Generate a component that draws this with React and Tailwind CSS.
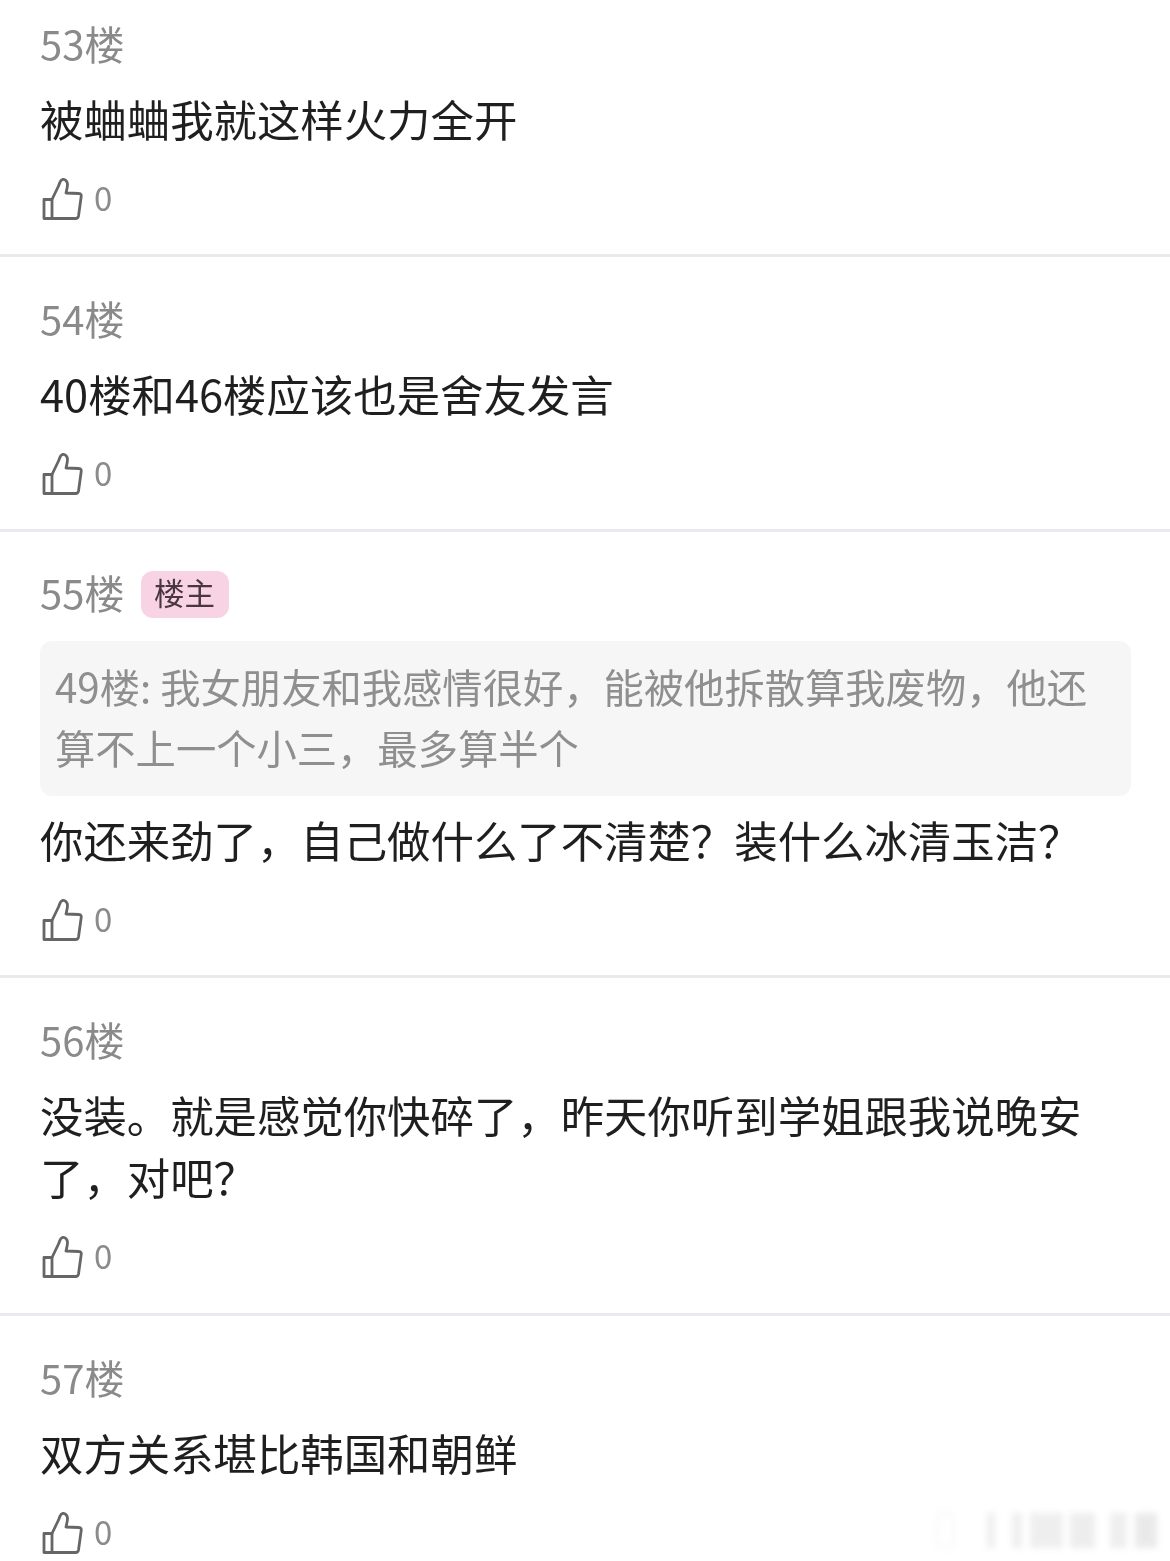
const font = { fontFamily: '"Noto Sans CJK SC", "Noto Sans", sans-serif' };

function Thumb() {
  return (
    <svg width="42" height="44" viewBox="0 0 42 44" fill="none" stroke="#666666" strokeWidth="2.8" strokeLinejoin="round" strokeLinecap="round" className="mt-[4px] block">
      <path d="M3 22.5H11V41.5H3Z" />
      <path d="M11 22.5L17.5 9C18.7 6.5 19 3 21.5 2.5C24.5 2 26.5 4.5 26.5 7.5C26.5 10.5 25.5 13.5 25 16L38 16.5C40 16.5 40.5 18 40.2 19.5L37.5 39C37.2 40.8 36 41.5 34.5 41.5H11" />
    </svg>
  );
}

function Like() {
  return (
    <div className="flex h-[44px] items-center pl-[1px]">
      <Thumb />
      <span className="ml-[11px] text-[33px] leading-[44px] text-[#8b8b8b]">0</span>
    </div>
  );
}

function Post({ floor, badge, quote, lines, last, tall, wide }) {
  const bottom = last
    ? "pb-0"
    : tall
      ? "pb-[36.5px] border-b-[3px] border-[#e9e9ee]"
      : wide
        ? "pb-[35.5px] border-b-[3px] border-[#e9e9ee]"
        : "pb-[34.5px] border-b-[3px] border-[#e9e9ee]";
  return (
    <section className={`px-[40px] ${badge ? "pt-[32px]" : "pt-[33px]"} ${bottom}`}>
      <div className="flex h-[56px] items-center">
        <span className="text-[40px] leading-[56px] text-[#8a8a8a]">{floor}</span>
        {badge && (
          <span className="ml-[17px] mt-[4px] flex h-[47px] w-[88px] items-center justify-center rounded-[12px] bg-[#f8d3e4] pb-[3px] pr-[2px] text-[30.5px] leading-none text-[#4a3640]">
            {badge}
          </span>
        )}
      </div>
      {quote && (
        <div className="mt-[21px] w-[1091px] rounded-[12px] bg-[#f6f6f6] px-[15px] pt-[13.5px] pb-[19.5px] text-[40.3px] leading-[61px] text-[#8f8f8f]">
          {quote.map((q) => (
            <div key={q} className="whitespace-nowrap">{q}</div>
          ))}
        </div>
      )}
      <div className={`${quote ? "mt-[12px]" : "mt-[16px]"} text-[43.4px] leading-[62px] text-[#1f1f1f]`}>
        {lines.map((l) => (
          <div key={l} className="whitespace-nowrap">{l}</div>
        ))}
      </div>
      <div className="mt-[26px]"><Like /></div>
    </section>
  );
}

export default function App() {
  return (
    <div style={font} className="relative h-[1561px] w-[1170px] overflow-hidden bg-white">
      <div className="-mt-[18px] blur-[0.6px]">
        <Post floor="53楼" lines={["被蛐蛐我就这样火力全开"]} />
        <Post floor="54楼" lines={["40楼和46楼应该也是舍友发言"]} wide />
        <Post
          floor="55楼"
          badge="楼主"
          quote={["49楼: 我女朋友和我感情很好，能被他拆散算我废物，他还", "算不上一个小三，最多算半个"]}
          lines={["你还来劲了，自己做什么了不清楚？装什么冰清玉洁？"]}
        />
        <Post floor="56楼" lines={["没装。就是感觉你快碎了，昨天你听到学姐跟我说晚安", "了，对吧？"]} tall />
        <Post floor="57楼" lines={["双方关系堪比韩国和朝鲜"]} last />
      </div>
      <div className="absolute left-[937px] top-[1513px] flex h-[35px] items-stretch opacity-60 blur-[3px]">
        <div className="h-full w-[16px] border border-[#e0e0e0] bg-white" />
        <div className="ml-[34px] w-[8px] bg-[#e4e4e4]" />
        <div className="ml-[17px] w-[10px] bg-[#e4e4e4]" />
        <div className="ml-[8px] w-[33px] bg-[#e4e4e4]" />
        <div className="ml-[7px] w-[25px] bg-[#e2e2e2]" />
        <div className="ml-[15px] w-[17px] bg-[#e4e4e4]" />
        <div className="ml-[8px] w-[22px] bg-[#dcdcdc]" />
      </div>
    </div>
  );
}
